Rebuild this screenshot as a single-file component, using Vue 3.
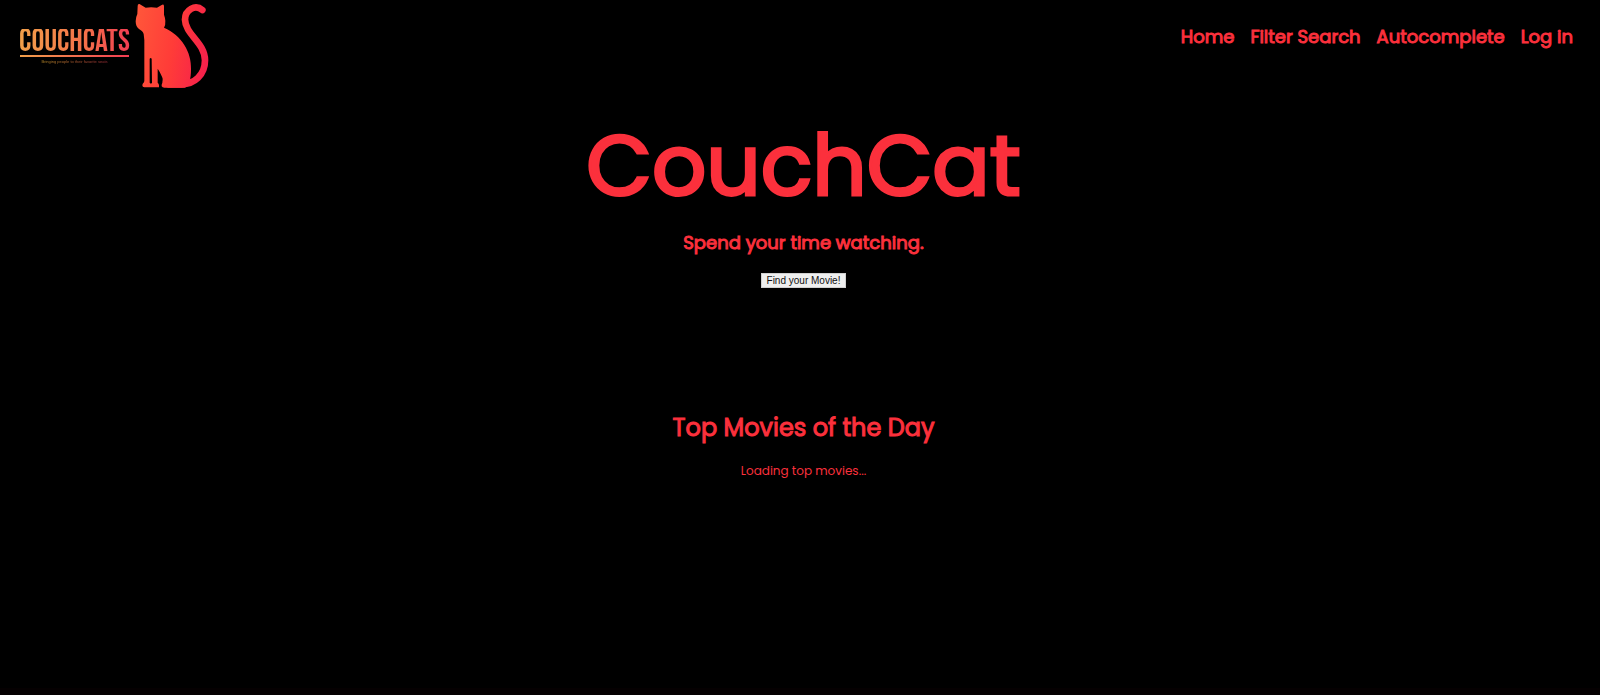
<script setup>
const links = ['Home', 'Filter Search', 'Autocomplete', 'Log in']
</script>

<template>
  <div class="page">
    <header class="bar">
      <a class="logo" href="#home">
        <span class="wordmark">
          <span class="name">COUCHCATS</span>
          <span class="rule"></span>
          <span class="motto">Bringing people to their favorite seats</span>
        </span>
        <svg class="cat" viewBox="0 0 240 270" aria-hidden="true">
          <defs>
            <linearGradient id="fur" gradientUnits="userSpaceOnUse" x1="0" y1="100" x2="230" y2="140">
              <stop offset="0" stop-color="#ff553a" />
              <stop offset="0.5" stop-color="#ff3c38" />
              <stop offset="1" stop-color="#f51f4c" />
            </linearGradient>
          </defs>
          <path
            fill="url(#fur)"
            d="M12 12Q8 12 8 18L7 42Q2 52 2 64C2 74 5 82 12 87C18 91 24 94 26 102L28 120V242C28 249 22 249 22 256Q22 262 28 262H72V256Q72 251 68 248V206Q74 214 81 230C85 238 82 242 82 248Q79 254 80 259Q82 263 88 263H150C162 258 168 238 168 208C170 156 140 106 87 83Q92 74 91 62Q90 52 87 44V18Q86 11 80 15L66 23Q48 20 32 23L17 14Q14 11 12 12ZM44 176Q47 172 50 176L51 248Q48 253 44 248Z"
          />
          <path
            fill="none"
            stroke="url(#fur)"
            stroke-width="20"
            stroke-linecap="round"
            d="M202 30C181 12 150 29 150 59C151 104 210 128 210 181C210 226 177 253 140 253H100"
          />
        </svg>
      </a>
      <nav class="nav">
        <a v-for="link in links" :key="link" href="#">{{ link }}</a>
      </nav>
    </header>

    <main class="content">
      <h1>CouchCat</h1>
      <p class="tagline">Spend your time watching.</p>
      <button type="button">Find your Movie!</button>
      <section class="top">
        <h2>Top Movies of the Day</h2>
        <p class="loading">Loading top movies...</p>
      </section>
    </main>
    <footer class="foot"></footer>
  </div>
</template>

<style>
body {
  background: #000;
}
</style>

<style scoped>
.page {
  display: flex;
  flex-direction: column;
  min-height: 100vh;
  background: #000;
  color: #fb303c;
  font-family: Poppins, Inter, sans-serif;
}

.bar {
  display: flex;
  justify-content: space-between;
  align-items: flex-start;
  padding: 0 27px 0 20px;
}

.logo {
  display: flex;
  gap: 6px;
  text-decoration: none;
}

.wordmark {
  display: flex;
  flex-direction: column;
  align-items: center;
  width: 109px;
  padding-top: 29px;
}

.name {
  background: linear-gradient(90deg, #f2a04a, #f4704a 60%, #f23c52);
  background-clip: text;
  color: transparent;
  font: 400 32px/26px "Bebas Neue", "Roboto Condensed", "Liberation Sans Narrow", "DejaVu Sans Condensed", sans-serif;
  white-space: nowrap;
}

.rule {
  width: 100%;
  height: 2px;
  background: linear-gradient(90deg, #f2a04a, #f23c52);
}

.motto {
  margin-top: 2px;
  background: linear-gradient(90deg, #b88a28, #a02c38);
  background-clip: text;
  color: transparent;
  font: 4px/5px "Liberation Sans", sans-serif;
  white-space: nowrap;
}

.cat {
  width: 80px;
  height: 90px;
}

.nav {
  display: flex;
  gap: 16px;
  padding-top: 25px;
}

.nav a {
  color: inherit;
  font-size: 18px;
  -webkit-text-stroke: 1px;
  line-height: 24px;
  text-decoration: none;
}

.content {
  display: flex;
  flex: 1;
  flex-direction: column;
  align-items: center;
  padding: 16px 0 0 7px;
}

h1 {
  margin: 0;
  font-size: 85px;
  font-weight: 400;
  -webkit-text-stroke: 3px;
  line-height: 120px;
}

.tagline {
  margin: 5px 0 0;
  font-size: 18px;
  -webkit-text-stroke: 1px;
  line-height: 24px;
}

button {
  margin-top: 18px;
  padding: 1px 5px 0;
  border: 1px solid #d0d0d0;
  border-radius: 0;
  background: #efefef;
  color: #111;
  font: 10px/12px "Liberation Sans", sans-serif;
}

.top {
  margin-top: 124px;
  text-align: center;
}

h2 {
  margin: 0;
  font-size: 24px;
  font-weight: 400;
  -webkit-text-stroke: 1px;
  line-height: 32px;
}

.loading {
  margin: 17px 0 0;
  font-size: 12px;
  line-height: 20px;
}

.foot {
  height: 7px;
  background: #050001;
}
</style>
